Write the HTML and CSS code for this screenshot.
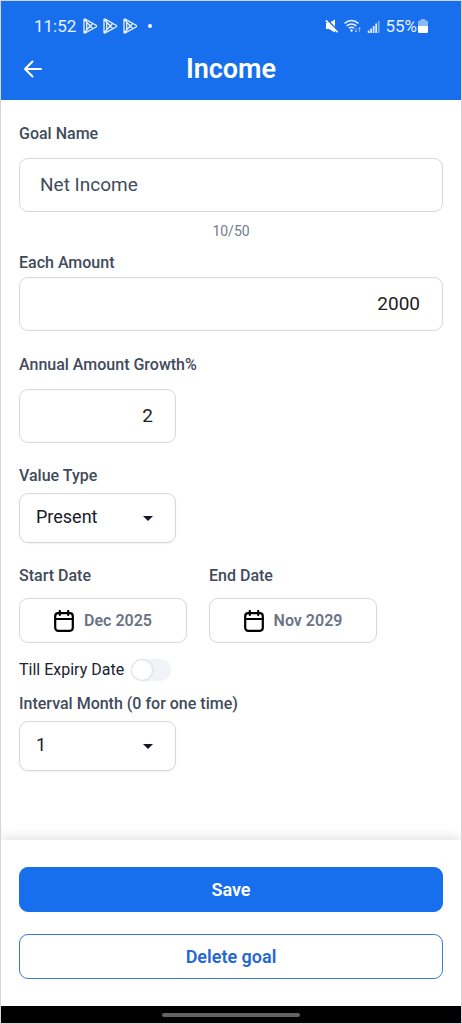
FILE: index.html
```
<!DOCTYPE html>
<html lang="en">
<head>
<meta charset="utf-8">
<meta name="viewport" content="width=device-width, initial-scale=1">
<title>Income</title>
<link rel="stylesheet" href="styles.css">
</head>
<body>
<div class="screen">
  <header class="header">
    <div class="status">
      <div class="status-left">
        <span>11:52</span>
        <svg class="play" viewBox="0 0 16 16"><path d="M2 1.8v12.4q0 1.2 1.2.6L14 9q1.2-.9 0-1.8L3.2 1.200Q2 .7 2 1.800zM2.300 1.500l8.500 9.200M2.300 14.500l8.500-9.200M4.700 4.200v7.600"/></svg>
        <svg class="play" viewBox="0 0 16 16"><path d="M2 1.8v12.4q0 1.2 1.2.6L14 9q1.2-.9 0-1.8L3.2 1.200Q2 .7 2 1.800zM2.300 1.500l8.500 9.200M2.300 14.500l8.500-9.200M4.700 4.200v7.600"/></svg>
        <svg class="play" viewBox="0 0 16 16"><path d="M2 1.8v12.4q0 1.2 1.2.6L14 9q1.2-.9 0-1.8L3.2 1.200Q2 .7 2 1.800zM2.300 1.500l8.500 9.200M2.300 14.500l8.500-9.200M4.700 4.200v7.600"/></svg>
        <span class="dot"></span>
      </div>
      <div class="status-right">
        <svg width="14" height="14" viewBox="0 0 14 14"><path d="M1 4h3l6-3.500v13L4 10H1z" fill="#fff"/><path d="M1.800 .4 13.600 12.200" stroke="#176fee" stroke-width="1.400"/><path d="M.8 1.400 12.600 13.200" stroke="#fff" stroke-width="1.600"/></svg>
        <svg width="18" height="14" viewBox="0 0 18 14" fill="none" stroke="#e9f1fe" stroke-width="1.500"><path d="M.5 4.300q7-5.600 14 0M2.700 6.800q4.800-3.800 9.600 0M4.900 9.200q2.600-2 5.200 0"/><circle cx="7.500" cy="11.500" r="1.200" fill="#e9f1fe" stroke="none"/><path d="M12 9v4m-1.200-1.300L12 13l1.200-1.300M15.500 13V8.500m-1.300 1.500 1.300-1.500L16.800 10" stroke-width="1" opacity=".5"/></svg>
        <svg width="13" height="13" viewBox="0 0 13 13" fill="#e9f1fe"><path d="M.8 10.500h1.700V13H.8zM3.300 8.500H5V13H3.300zM5.800 6h1.700v7H5.800zM8.300 3.500H10V13H8.300z"/><path d="M10.800 1h1.700v12h-1.700z" opacity=".5"/></svg>
        <span class="battery-text">55%</span>
        <svg width="10" height="14" viewBox="0 0 10 14"><path d="M3 0h4v1.500h1.500Q10 1.500 10 3v4H0V3q0-1.500 1.500-1.500H3z" fill="#8db8f8"/><path d="M0 7h10v5.500q0 1.500-1.500 1.500h-7Q0 14 0 12.500z" fill="#fff"/></svg>
      </div>
    </div>
    <div class="titlebar">
      <button class="back" type="button" aria-label="Back">
        <svg width="20" height="20" viewBox="0 0 20 20" fill="none" stroke="#fff" stroke-width="2" stroke-linecap="round" stroke-linejoin="round"><path d="M18 10H2M9.500 2.500 2 10l7.500 7.500"/></svg>
      </button>
      <h1 class="title">Income</h1>
    </div>
  </header>

  <main class="form">
    <div class="field spaced">
      <label class="label" for="name">Goal Name</label>
      <input class="control name" id="name" type="text" value="Net Income" maxlength="50">
      <p class="counter">10/50</p>
    </div>
    <div class="field amount">
      <label class="label" for="amount">Each Amount</label>
      <input class="control number" id="amount" type="text" inputmode="numeric" value="2000">
    </div>
    <div class="field spaced growth">
      <label class="label" for="growth">Annual Amount Growth%</label>
      <input class="control number short" id="growth" type="text" inputmode="numeric" value="2">
    </div>
    <div class="field value-type">
      <label class="label" for="type">Value Type</label>
      <div class="picker short">
        <select class="select" id="type"><option>Present</option><option>Future</option></select>
        <svg class="caret" viewBox="0 0 10 5"><path d="M0 0h10L5 5z"/></svg>
      </div>
    </div>
    <div class="dates">
      <div class="field date-field">
        <label class="label" for="start">Start Date</label>
        <button class="date" id="start" type="button">
          <svg class="calendar" viewBox="0 0 20 22"><rect x="1.200" y="3.200" width="17.600" height="17.600" rx="3"/><path d="M1.200 9h17.600M5.800 1v4M14.200 1v4"/></svg>
          <span>Dec 2025</span>
        </button>
      </div>
      <div class="field date-field">
        <label class="label" for="end">End Date</label>
        <button class="date" id="end" type="button">
          <svg class="calendar" viewBox="0 0 20 22"><rect x="1.200" y="3.200" width="17.600" height="17.600" rx="3"/><path d="M1.200 9h17.600M5.800 1v4M14.200 1v4"/></svg>
          <span>Nov 2029</span>
        </button>
      </div>
    </div>
    <div class="expiry">
      <label for="expiry">Till Expiry Date</label>
      <input class="switch" id="expiry" type="checkbox" role="switch">
    </div>
    <div class="field interval">
      <label class="label" for="interval">Interval Month (0 for one time)</label>
      <div class="picker short">
        <select class="select" id="interval"><option>1</option><option>2</option><option>3</option></select>
        <svg class="caret" viewBox="0 0 10 5"><path d="M0 0h10L5 5z"/></svg>
      </div>
    </div>
  </main>

  <footer class="actions">
    <button class="action save" type="button">Save</button>
    <button class="action delete" type="button">Delete goal</button>
  </footer>
  <div class="navbar"><span class="handle"></span></div>
</div>
</body>
</html>
```
FILE: styles.css
```
* {
  box-sizing: border-box;
}

body {
  margin: 0;
  background: #fff;
  color: #1d2230;
  font-family: Roboto, "Liberation Sans", sans-serif;
}

button,
input,
select {
  margin: 0;
  font: inherit;
}

.screen {
  display: flex;
  flex-direction: column;
  min-height: 100vh;
  border: 1px solid #d3d5d8;
}

.header {
  padding: 13px 18px 14px;
  background: #176fee;
  color: #fff;
}

.status {
  display: flex;
  justify-content: space-between;
  align-items: center;
  height: 24px;
  padding: 0 15px;
  color: #e9f1fe;
  font-size: 17px;
}

.status-left,
.status-right {
  display: flex;
  align-items: center;
}

.status-left {
  gap: 4px;
}

.status-right {
  gap: 5px;
}

.status-right svg:last-child {
  margin-left: -4px;
}

.play {
  width: 16px;
  height: 16px;
  fill: none;
  stroke: #e9f1fe;
  stroke-width: 1.3;
}

.status-left span:first-child {
  margin-right: 2px;
}

.dot {
  width: 4px;
  height: 4px;
  margin-left: 6px;
  border-radius: 50%;
  background: #fff;
}

.titlebar {
  display: grid;
  grid-template-columns: 28px 1fr 28px;
  align-items: center;
  margin-top: 14px;
  height: 34px;
}

.back {
  display: flex;
  justify-content: center;
  padding: 4px 0;
  border: 0;
  background: none;
}

.title {
  margin: 0;
  font-size: 27px;
  font-weight: 600;
  line-height: 32px;
  text-align: center;
}

.form {
  flex: 1;
  padding: 24px 18px;
}

.field {
  display: flex;
  flex-direction: column;
  align-items: flex-start;
  gap: 7px;
}

.spaced {
  gap: 14px;
}

.label {
  color: #414b5c;
  font-size: 16px;
  font-weight: 500;
  line-height: 20px;
}

.control,
.picker,
.date {
  border: 1px solid #d5d7dc;
  border-radius: 9px;
  background: #fff;
}

.control {
  width: 100%;
  height: 54px;
  padding: 0 22px 2px;
  color: #202124;
  font-size: 19px;
}

.name {
  padding: 0 20px 2px;
  color: #414b5c;
}

.number {
  text-align: right;
}

.control.short,
.picker.short {
  width: 37%;
}

.counter {
  align-self: center;
  margin: -5px 0 0;
  color: #747b8b;
  font-size: 14px;
  line-height: 20px;
}

.amount {
  gap: 4px;
  margin-top: 12px;
}

.growth,
.value-type {
  margin-top: 23px;
}

.growth {
  margin-top: 24px;
}

.picker {
  position: relative;
  height: 50px;
  box-shadow: 0 1px 2px #0000000d;
}

.select {
  width: 100%;
  height: 100%;
  padding: 0 16px 4px;
  border: 0;
  border-radius: inherit;
  background: none;
  color: #161b2c;
  font-size: 18px;
  appearance: none;
}

.caret {
  position: absolute;
  top: 22px;
  right: 22px;
  width: 10px;
  height: 5px;
  fill: #111827;
  pointer-events: none;
}

.dates {
  display: flex;
  gap: 22px;
  margin-top: 23px;
}

.date-field {
  width: 168px;
  gap: 12px;
}

.date {
  display: flex;
  justify-content: center;
  align-items: center;
  gap: 10px;
  width: 100%;
  height: 45px;
  padding: 0;
  color: #6b7385;
  font-size: 16px;
  font-weight: 600;
}

.calendar {
  width: 20px;
  height: 22px;
  fill: none;
  stroke: #000;
  stroke-width: 2.2;
  stroke-linecap: round;
}

.expiry {
  display: flex;
  align-items: center;
  gap: 7px;
  margin-top: 16px;
  font-size: 16px;
  line-height: 22px;
}

.switch {
  display: flex;
  width: 40px;
  height: 22px;
  padding: 1px;
  border-radius: 11px;
  background: #f2f3f7;
  appearance: none;
}

.switch::before {
  width: 20px;
  height: 20px;
  border-radius: 50%;
  background: #fff;
  box-shadow: 0 0 3px #00000033;
  content: "";
}

.switch:checked {
  justify-content: flex-end;
  background: #176fee;
}

.interval {
  margin-top: 13px;
}

.actions {
  display: flex;
  flex-direction: column;
  gap: 22px;
  padding: 27px 18px;
  background: #fff;
  box-shadow: 0 -2px 12px #00000021;
  clip-path: inset(-20px 0 0);
}

.action {
  height: 45px;
  border: 1px solid #176fee;
  border-radius: 9px;
  font-size: 18px;
  font-weight: 600;
}

.save {
  background: #176fee;
  color: #fff;
}

.delete {
  border-color: #3a79d8;
  background: #fff;
  color: #2568d4;
}

.navbar {
  display: flex;
  justify-content: center;
  align-items: center;
  height: 17px;
  background: #000;
}

.handle {
  width: 30%;
  height: 4px;
  border-radius: 2px;
  background: #626262;
}
```
